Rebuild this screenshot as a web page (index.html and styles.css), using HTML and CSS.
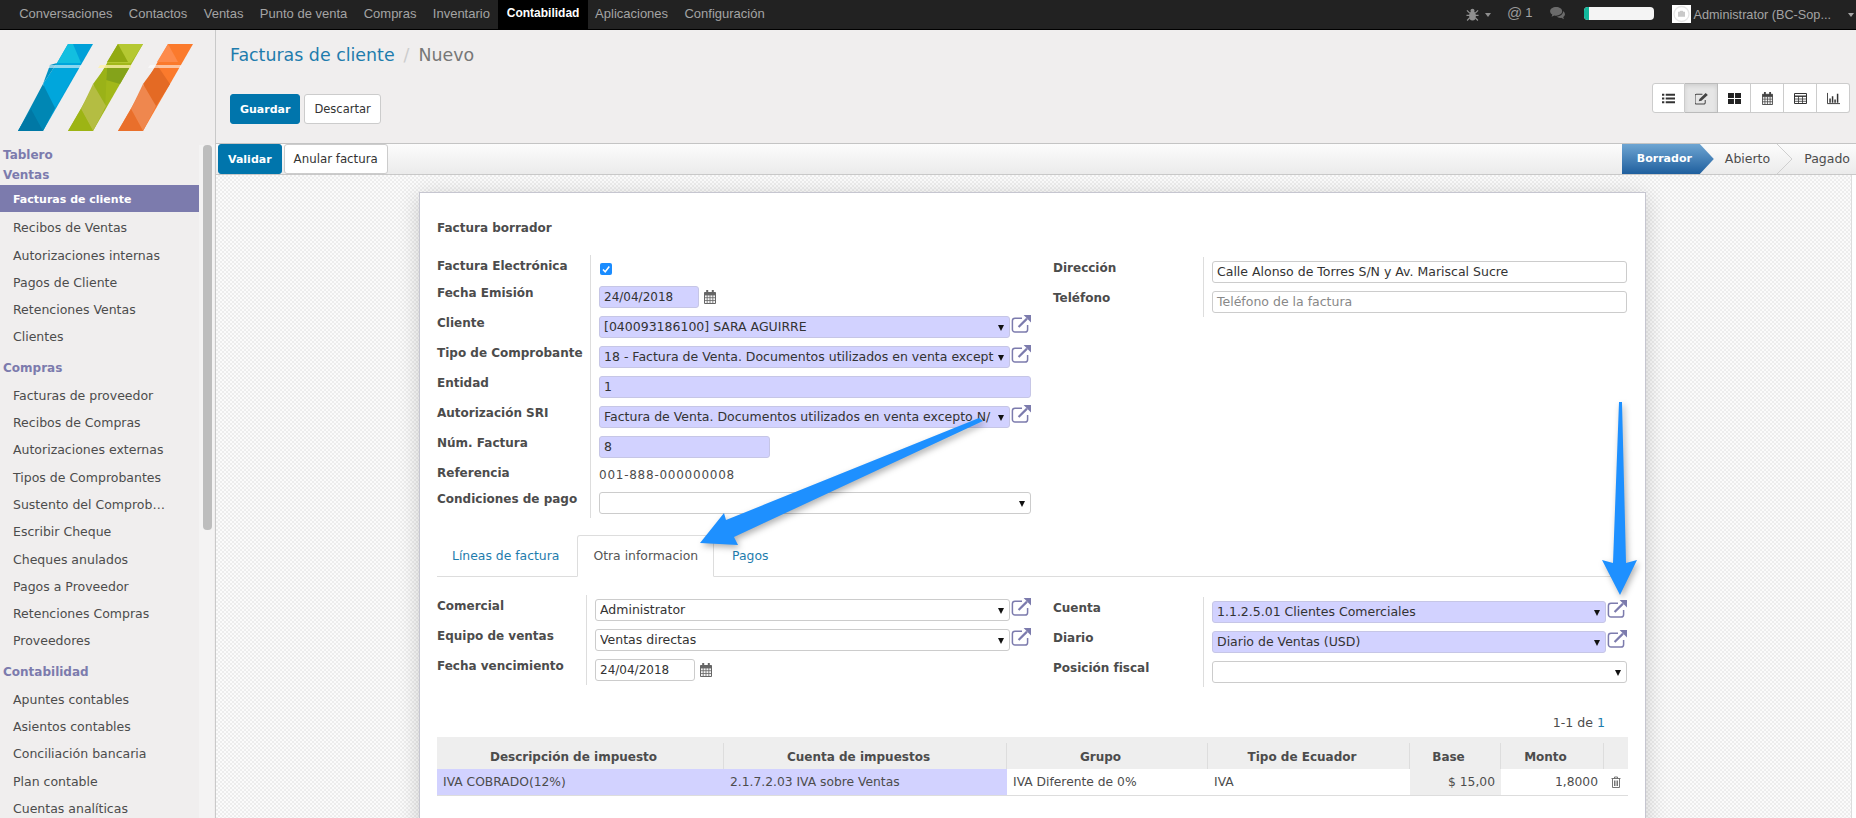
FILE: index.html
```html
<!DOCTYPE html>
<html lang="es">
<head>
<meta charset="utf-8">
<title>Facturas de cliente</title>
<link rel="stylesheet" href="styles.css">
</head>
<body>
<svg class="defs" width="0" height="0" aria-hidden="true">
  <symbol id="i-ext" viewBox="0 0 20 18">
    <path d="M11 3.2H4a2.6 2.6 0 0 0-2.6 2.6v8.6A2.6 2.6 0 0 0 4 17h10a2.6 2.6 0 0 0 2.6-2.6V10" fill="none" stroke="currentColor" stroke-width="1.5"/>
    <path d="M7.6 12 16 3.6" fill="none" stroke="currentColor" stroke-width="2.2"/>
    <path d="M12.6 0H20v7.4z" fill="currentColor"/>
  </symbol>
  <symbol id="i-cal" viewBox="0 0 12 14">
    <path d="M.5 2.5h11v11H.5z" fill="#f4f4f4" stroke="currentColor"/>
    <path d="M.5 5h11M.5 7.7h11M.5 10.5h11M3.2 5v8.5M6 5v8.5M8.8 5v8.5" stroke="currentColor" stroke-width=".8"/>
    <path d="M2.2 0h2v3.4h-2zM7.8 0h2v3.4h-2z" fill="currentColor"/>
    <path d="M.5 2.5h11V5H.5z" fill="currentColor"/>
  </symbol>
</svg>

<header class="topbar">
  <nav class="topnav">
    <a>Conversaciones</a><a>Contactos</a><a>Ventas</a><a>Punto de venta</a><a>Compras</a><a>Inventario</a><a class="on">Contabilidad</a><a>Aplicaciones</a><a>Configuración</a>
  </nav>
  <div class="systray">
    <svg class="t-bug" viewBox="0 0 14 14"><ellipse cx="7" cy="8.5" rx="3.6" ry="5" fill="#8f8f8f"/><circle cx="7" cy="3" r="2.2" fill="#8f8f8f"/><path d="M1 2.5l3 3M13 2.5l-3 3M.5 8h13M1.2 13.5 4 10.5M12.8 13.5 10 10.5" stroke="#8f8f8f" stroke-width="1.3" fill="none"/></svg>
    <i class="caret"></i>
    <span class="t-at">@</span><span class="t-one">1</span>
    <svg class="t-chat" viewBox="0 0 17 14"><path d="M6.5 0C2.9 0 0 2 0 4.6c0 1.500 1 2.800 2.400 3.600L1.600 10.600l3-1.500c.6.100 1.200.2 1.900.2 3.600 0 6.500-2.100 6.500-4.700S10.100 0 6.500 0z" fill="#6b6b6b"/><path d="M14 4.500c.1 3-2.900 5.500-7 5.800 1 1 2.500 1.500 4 1.500l.9-.1 3 1.600-.8-2.400c1.200-.7 1.900-1.800 1.900-3 0-1.500-.8-2.700-2-3.400z" fill="#6b6b6b"/></svg>
    <div class="progress"><span class="progress-fill"></span></div>
    <div class="avatar"><svg viewBox="0 0 19 18"><circle cx="9.500" cy="9" r="7.500" fill="none" stroke="#e6e6e6" stroke-width="1.300"/><path d="M6 6.800h1.600l.7-1h2.400l.7 1H13v5H6z" fill="#c9c9c9"/></svg></div>
    <span class="t-user">Administrator (BC-Sop...</span>
    <i class="caret user-caret"></i>
  </div>
</header>

<div class="app">
  <aside class="sidebar">
    <div class="logo">
      <svg viewBox="0 0 175 87" width="175" height="87">
        <g>
          <path d="M50 0h25L25 87H0z" fill="#00a0d8"/>
          <path d="M50 0h5l8 19H39z" fill="#12bfe0"/>
          <path d="M39 19h24L37 64 25 40z" fill="#00a6dc"/>
          <path d="M25 40 37 64 25 87H0z" fill="#0087b4"/>
          <path d="M25 40 32 21 39 19z" fill="#0093c4"/>
          <path d="M13 65 25 87H0z" fill="#0078a5"/>
          <path d="M32 21h31v3H30z" fill="#fff" opacity=".55"/>
        </g>
        <g transform="translate(50)">
          <path d="M50 0h25L25 87H0z" fill="#a2b81a"/>
          <path d="M50 0h25L63 19H39z" fill="#b5c832"/>
          <path d="M50 0 60 18H39z" fill="#92aa12"/>
          <path d="M39 21h24L52 40 38 36z" fill="#84a31a"/>
          <path d="M25 40 39 21l-2 46z" fill="#9ab218"/>
          <path d="M25 40 38 62 25 87 13 65z" fill="#b4bd42"/>
          <path d="M13 65 25 87H0z" fill="#9db414"/>
          <path d="M32 21h31v3H30z" fill="#fff3a8" opacity=".8"/>
        </g>
        <g transform="translate(100)">
          <path d="M50 0h25L25 87H0z" fill="#fb7a2c"/>
          <path d="M50 0 60 18H39z" fill="#fd8b4c"/>
          <path d="M25 40 39 21l13 19-15 24z" fill="#e46a24"/>
          <path d="M25 40 38 62 25 87 13 65z" fill="#ef874e"/>
          <path d="M13 65 25 87H0z" fill="#e96f2b"/>
          <path d="M32 21h31v3H30z" fill="#fff" opacity=".55"/>
        </g>
      </svg>
    </div>
    <div class="menu-wrap">
      <div class="menu">
        <div class="mhead tight">Tablero</div>
        <div class="mhead tight">Ventas</div>
        <a class="mitem on">Facturas de cliente</a>
        <a class="mitem">Recibos de Ventas</a>
        <a class="mitem">Autorizaciones internas</a>
        <a class="mitem">Pagos de Cliente</a>
        <a class="mitem">Retenciones Ventas</a>
        <a class="mitem">Clientes</a>
        <div class="mhead">Compras</div>
        <a class="mitem">Facturas de proveedor</a>
        <a class="mitem">Recibos de Compras</a>
        <a class="mitem">Autorizaciones externas</a>
        <a class="mitem">Tipos de Comprobantes</a>
        <a class="mitem">Sustento del Comprobante</a>
        <a class="mitem">Escribir Cheque</a>
        <a class="mitem">Cheques anulados</a>
        <a class="mitem">Pagos a Proveedor</a>
        <a class="mitem">Retenciones Compras</a>
        <a class="mitem">Proveedores</a>
        <div class="mhead">Contabilidad</div>
        <a class="mitem">Apuntes contables</a>
        <a class="mitem">Asientos contables</a>
        <a class="mitem">Conciliación bancaria</a>
        <a class="mitem">Plan contable</a>
        <a class="mitem">Cuentas analíticas</a>
      </div>
      <div class="menu-track"><div class="menu-thumb"></div></div>
    </div>
  </aside>

  <main class="main">
    <section class="head">
      <div class="head-left">
        <div class="crumbs"><a>Facturas de cliente</a><span class="sep">/</span><span class="cur">Nuevo</span></div>
        <div class="head-btns"><button class="btn primary">Guardar</button><button class="btn">Descartar</button></div>
      </div>
      <div class="views">
        <span class="view"><svg viewBox="0 0 14 12"><path d="M0 1h2.500v2H0zM4 1h10v2H4zM0 5h2.500v2H0zM4 5h10v2H4zM0 9h2.500v2H0zM4 9h10v2H4z" fill="#333"/></svg></span>
        <span class="view on"><svg viewBox="0 0 14 13"><path d="M11 8v3a1.500 1.500 0 0 1-1.500 1.500h-8A1.500 1.500 0 0 1 0 11V3.500A1.500 1.500 0 0 1 1.500 2H8" fill="none" stroke="#444" stroke-width="1.100"/><path d="M4 9.500 4.800 7 11.500 .5 13.800 2.700 7 9z" fill="#444"/></svg></span>
        <span class="view"><svg viewBox="0 0 12 10"><path d="M0 0h5.500v4.500H0zM6.500 0H12v4.500H6.500zM0 5.500h5.500V10H0zM6.500 5.500H12V10H6.500z" fill="#222"/></svg></span>
        <span class="view cal-view"><svg viewBox="0 0 12 14"><use href="#i-cal"/></svg></span>
        <span class="view"><svg viewBox="0 0 13 11"><path d="M.5.500h12v10H.5z" fill="none" stroke="#333"/><path d="M.5 3.200h12" stroke="#333" stroke-width="1.400"/><path d="M.5 6h12M.5 8.300h12M4.500 3v7.500M8.500 3v7.500" stroke="#333" stroke-width=".8"/></svg></span>
        <span class="view"><svg viewBox="0 0 14 12"><path d="M.5 0v11.500H14" fill="none" stroke="#333"/><path d="M2.500 6h1.600v4.500H2.500zM5.200 3.500h1.600v7H5.200zM7.900 7h1.600v3.500H7.900zM10.600 1h1.600v9.500h-1.600z" fill="#333"/></svg></span>
      </div>
    </section>

    <section class="statusbar">
      <div class="actions"><button class="btn primary">Validar</button><button class="btn">Anular factura</button></div>
      <div class="states">
        <span class="st-active">Borrador</span>
        <span class="st-item first">Abierto</span>
        <svg class="chevron" viewBox="0 0 15 30" preserveAspectRatio="none"><path d="M0 0 15 15 0 30" fill="none" stroke="#cfcfcf"/></svg>
        <span class="st-item last">Pagado</span>
      </div>
    </section>

    <div class="scroller">
      <div class="canvas">
        <article class="sheet">
          <h1 class="sheet-title">Factura borrador</h1>

          <div class="cols">
            <div class="group g-top">
              <div class="lab">Factura Electrónica</div>
              <div class="val first-val"><span class="check"><svg viewBox="0 0 12 12"><path d="M3 6.500 5.200 8.800 9.300 3.500" fill="none" stroke="#fff" stroke-width="1.500"/></svg></span></div>

              <div class="lab">Fecha Emisión</div>
              <div class="val"><span class="field date req">24/04/2018</span><svg class="cal"><use href="#i-cal"/></svg></div>

              <div class="lab">Cliente</div>
              <div class="val"><span class="field sel req"><span class="ftext">[040093186100] SARA AGUIRRE</span><i class="arrow"></i></span><svg class="ext"><use href="#i-ext"/></svg></div>

              <div class="lab">Tipo de Comprobante</div>
              <div class="val"><span class="field sel req"><span class="ftext">18 - Factura de Venta. Documentos utilizados en venta excepto</span><i class="arrow"></i></span><svg class="ext"><use href="#i-ext"/></svg></div>

              <div class="lab">Entidad</div>
              <div class="val"><span class="field wide req">1</span></div>

              <div class="lab">Autorización SRI</div>
              <div class="val"><span class="field sel req"><span class="ftext">Factura de Venta. Documentos utilizados en venta excepto N/</span><i class="arrow"></i></span><svg class="ext"><use href="#i-ext"/></svg></div>

              <div class="lab">Núm. Factura</div>
              <div class="val"><span class="field num req">8</span></div>

              <div class="lab">Referencia</div>
              <div class="val short-val"><span class="plain">001-888-000000008</span></div>

              <div class="lab">Condiciones de pago</div>
              <div class="val"><span class="field sel wide"><span class="ftext"></span><i class="arrow"></i></span></div>
            </div>

            <div class="group g-right g-shift">
              <div class="lab">Dirección</div>
              <div class="val"><span class="field wide">Calle Alonso de Torres S/N y Av. Mariscal Sucre</span></div>
              <div class="lab">Teléfono</div>
              <div class="val"><span class="field wide ph">Teléfono de la factura</span></div>
            </div>
          </div>

          <div class="tabs">
            <a class="tab">Líneas de factura</a>
            <a class="tab on">Otra informacion</a>
            <a class="tab">Pagos</a>
          </div>

          <div class="cols cols-2">
            <div class="group g-second">
              <div class="lab">Comercial</div>
              <div class="val"><span class="field sel"><span class="ftext">Administrator</span><i class="arrow"></i></span><svg class="ext"><use href="#i-ext"/></svg></div>
              <div class="lab">Equipo de ventas</div>
              <div class="val"><span class="field sel"><span class="ftext">Ventas directas</span><i class="arrow"></i></span><svg class="ext"><use href="#i-ext"/></svg></div>
              <div class="lab">Fecha vencimiento</div>
              <div class="val"><span class="field date">24/04/2018</span><svg class="cal"><use href="#i-cal"/></svg></div>
            </div>
            <div class="group g-right g-shift">
              <div class="lab">Cuenta</div>
              <div class="val"><span class="field sel req"><span class="ftext">1.1.2.5.01 Clientes Comerciales</span><i class="arrow"></i></span><svg class="ext"><use href="#i-ext"/></svg></div>
              <div class="lab">Diario</div>
              <div class="val"><span class="field sel req"><span class="ftext">Diario de Ventas (USD)</span><i class="arrow"></i></span><svg class="ext"><use href="#i-ext"/></svg></div>
              <div class="lab">Posición fiscal</div>
              <div class="val"><span class="field sel wide"><span class="ftext"></span><i class="arrow"></i></span></div>
            </div>
          </div>

          <div class="pager">1-1 de <a>1</a></div>

          <table class="taxes">
            <colgroup><col class="c1"><col class="c2"><col class="c3"><col class="c4"><col class="c5"><col class="c6"><col class="c7"></colgroup>
            <thead>
              <tr><th>Descripción de impuesto</th><th>Cuenta de impuestos</th><th>Grupo</th><th>Tipo de Ecuador</th><th>Base</th><th>Monto</th><th class="no-sep"></th></tr>
            </thead>
            <tbody>
              <tr>
                <td class="hl">IVA COBRADO(12%)</td>
                <td class="hl">2.1.7.2.03 IVA sobre Ventas</td>
                <td>IVA Diferente de 0%</td>
                <td>IVA</td>
                <td class="amount ro">$ 15,00</td>
                <td class="amount">1,8000</td>
                <td class="del"><svg viewBox="0 0 10 12" width="10" height="12"><path d="M.5 2.500h9M3.500 2.500V1h3v1.500M1.500 2.500V11.500h7V2.500M3.500 4.500v5.500M5 4.500v5.500M6.500 4.500v5.500" fill="none" stroke="#666" stroke-width=".9"/></svg></td>
              </tr>
            </tbody>
          </table>
        </article>
      </div>
      <div class="page-track"></div>
    </div>
  </main>
</div>

<svg class="overlay" viewBox="0 0 1856 818" width="1856" height="818" aria-hidden="true">
  <path class="mark" d="M979 418 983 421 734 537 738 545 700 543 724 513 726 520z"/>
  <path class="mark" d="M1619 402h3l4 161 11-3-17 35-18-35 11 3z"/>
</svg>
</body>
</html>
```
FILE: styles.css
```css
* { box-sizing: border-box; }
html, body { margin: 0; padding: 0; height: 818px; overflow: hidden; }
body {
  position: relative;
  font-family: "DejaVu Sans", sans-serif;
  font-size: 12px;
  color: #4c4c4c;
  background: #f0eeee;
}
a { text-decoration: none; color: inherit; }
.defs { display: block; height: 0; }

/* top bar */
.topbar {
  height: 30px;
  display: flex;
  justify-content: space-between;
  background: #222;
  border-bottom: 1px solid #000;
  font-family: "Liberation Sans", Arial, sans-serif;
  font-size: 13px;
  color: #a4a4a4;
}
.topnav { display: flex; padding-left: 11px; }
.topnav a { padding: 0 8.200px; line-height: 27px; height: 29px; }
.topnav a.on { width: 90px; padding: 0; text-align: center; background: #000; color: #fff; font-weight: 700; font-size: 12px; }
.topnav a.on + a { padding-left: 7px; }
.systray { display: flex; align-items: center; height: 29px; }
.t-bug { width: 13px; height: 13px; }
.caret { width: 0; height: 0; border: 3.5px solid transparent; border-top: 4px solid #8f8f8f; border-bottom: 0; margin-left: 6px; }
.t-at { font-size: 15px; margin-left: 16px; color: #999; margin-top: -5px; }
.t-one { margin-left: 3px; margin-top: -5px; }
.t-chat { width: 16px; height: 13px; margin-left: 17px; margin-top: -2px; }
.progress { width: 70px; height: 13px; margin-left: 18px; border-radius: 4px; background: #f4f4f4; overflow: hidden; margin-top: -3px; }
.progress-fill { display: block; width: 5px; height: 13px; background: #12b89c; }
.avatar { width: 19px; height: 18px; margin-left: 18px; background: #fff; margin-top: -1px; }
.avatar svg { display: block; width: 19px; height: 18px; }
.t-user { margin-left: 3px; font-size: 12.700px; }
.user-caret { margin-left: 17px; margin-right: 2px; border-top-color: #a4a4a4; }

/* app */
.app { display: flex; height: 788px; }
.sidebar { width: 216px; flex: none; border-right: 1px solid #c9c9c9; background: #f0eeee; }
.logo { height: 115px; padding: 14px 0 0 18px; }
.logo svg { display: block; }
.menu-wrap { display: flex; height: 673px; overflow: hidden; }
.menu { width: 199px; flex: none; }
.mhead { padding: 9px 0 2px 3px; line-height: 20px; font-weight: 700; color: #7c7bad; }
.mhead.tight { padding: 0 0 0 3px; line-height: 20px; }
.mitem {
  display: block;
  height: 27.300px;
  line-height: 31px;
  padding: 0 32px 0 13px;
  font-size: 12.500px;
  white-space: nowrap;
  overflow: hidden;
  text-overflow: ellipsis;
}
.mitem.on { background: #7c7bad; color: #fff; font-weight: 700; font-size: 11px; line-height: 29px; }
.menu-track { width: 15px; margin-left: 0; padding: 0 2px 0 4px; background: #f4f3f3; }
.menu-thumb { width: 9px; height: 385px; background: #bdbdbd; border-radius: 4px; }

.main { flex: 1; min-width: 0; display: flex; flex-direction: column; }
.head { height: 113px; display: flex; justify-content: space-between; padding: 0 6px 0 14px; }
.crumbs { height: 64px; padding-top: 13px; line-height: 24px; font-size: 17.400px; color: #777; }
.crumbs a { color: #1e7cad; }
.sep { color: #ccc; margin: 0 9px; }
.head-btns { display: flex; gap: 4px; }
.btn {
  height: 30px;
  padding: 0 9px;
  font: inherit;
  font-size: 11.500px;
  color: #333;
  background: #fff;
  border: 1px solid #ccc;
  border-radius: 3px;
}
.btn.primary { padding: 0 9px; background: #0075ac; border-color: #0075ac; color: #fff; font-weight: 700; font-size: 11px; }
.views { display: flex; margin-top: 53px; height: 30px; }
.view {
  width: 33px;
  display: flex;
  align-items: center;
  justify-content: center;
  background: #fff;
  border: 1px solid #ccc;
  border-left-width: 0;
}
.view:first-child { border-left-width: 1px; border-radius: 3px 0 0 3px; }
.view:last-child { border-radius: 0 3px 3px 0; }
.view svg { width: 13px; height: 13px; }
.view.on { background: #e6e6e6; border-color: #bbb; box-shadow: inset 0 2px 4px rgba(0,0,0,.1); }
.cal-view { color: #444; }

.statusbar {
  height: 32px;
  display: flex;
  justify-content: space-between;
  border-top: 1px solid #c4c4c4;
  border-bottom: 1px solid #c8c8c8;
  background: linear-gradient(#fcfcfc, #ebebeb);
}
.actions { display: flex; gap: 2px; padding-left: 2px; }
.actions .btn:not(.primary) { font-size: 11.800px; }
.states { display: flex; align-items: stretch; font-size: 12.500px; }
.st-active {
  width: 92px;
  padding-left: 15px;
  line-height: 30px;
  font-size: 11px;
  font-weight: 700;
  color: #fff;
  background: linear-gradient(#6ea5d2, #1f5f9e);
  clip-path: polygon(0 0, 78px 0, 100% 50%, 78px 100%, 0 100%);
}
.st-item { line-height: 30px; color: #4c4c4c; }
.st-item.first { padding: 0 7px 0 11px; }
.st-item.last { padding: 0 6px 0 12px; }
.chevron { width: 15px; height: 30px; }

.scroller { flex: 1; min-height: 0; display: flex; }
.canvas {
  flex: 1;
  min-width: 0;
  padding: 17px 0 0 203px;
  overflow: hidden;
  background: repeating-conic-gradient(#ededed 0 25%, #fbfbfb 0 50%) 0 0 / 4px 4px;
}
.page-track { width: 5px; background: #fff; border-left: 1px solid #ddd; }
.sheet {
  width: 1227px;
  height: 640px;
  padding: 24px 19px 0 17px;
  background: #fff;
  border: 1px solid #c6c6d0;
  box-shadow: 0 4px 20px rgba(0,0,0,.18);
}
.sheet-title { margin: 0; font-size: 12px; line-height: 22px; font-weight: 700; color: #4c4c4c; }

.cols { display: grid; grid-template-columns: 595px 574px; column-gap: 21px; margin-top: 16px; align-items: start; }
.group { display: grid; grid-auto-rows: 30px; }
.g-top { grid-template-columns: 154px 440px; }
.g-right { grid-template-columns: 151px 423px; }
.g-second { grid-template-columns: 150px 444px; }
.g-shift { margin-top: 2px; }
.lab { font-weight: 700; line-height: 22px; border-right: 1px solid #ddd; white-space: nowrap; }
.val { display: flex; padding: 4px 0 0 8px; min-width: 0; }
.g-top { grid-template-rows: 27px repeat(6, 30px) 26px 30px; }
.first-val { padding-top: 8px; }
.short-val { padding-top: 0; }
.check {
  width: 12px;
  height: 12px;
  margin-left: 1px;
  border-radius: 2px;
  background: #1a8cff;
}
.check svg { display: block; width: 12px; height: 12px; }
.plain { line-height: 26px; color: #4c4c4c; letter-spacing: .75px; }
.field {
  display: flex;
  align-items: center;
  height: 22px;
  padding: 0 4px;
  font-size: 12.500px;
  line-height: 20px;
  color: #333;
  background: #fff;
  border: 1px solid #ccc;
  border-radius: 3px;
  overflow: hidden;
  white-space: nowrap;
}
.field.req { background: #d2d2ff; border-color: #c6c6e6; }
.field.date { width: 100px; font-size: 12px; }
.field.num { width: 171px; }
.field.wide { flex: 1; }
.field.sel { flex: 1; min-width: 0; }
.field.ph { color: #888; }
.ftext { flex: 1; min-width: 0; overflow: hidden; }
.arrow { flex: none; width: 0; height: 0; margin: 2px 1px 0 4px; border: 3px solid transparent; border-top: 6px solid #111; border-bottom: 0; }
.ext { flex: none; width: 20px; height: 18px; margin: -1px 0 0 1px; color: #7c7bad; }
.cal { flex: none; width: 12px; height: 14px; margin: 4px 0 0 5px; color: #666; }

.tabs { display: flex; height: 42px; margin-top: 17px; border-bottom: 1px solid #ddd; font-size: 12.400px; }
.tab { padding: 0 18px 0 15px; line-height: 42px; color: #1e7cad; height: 41px; }
.tab.on { padding: 0 15px; color: #555; background: #fff; border: 1px solid #ddd; border-bottom-color: #fff; border-radius: 3px 3px 0 0; line-height: 40px; height: 42px; }
.tab.on + .tab { padding-left: 18px; }
.cols-2 { margin-top: 18px; }

.pager { height: 21px; margin-top: 25px; padding-right: 21px; text-align: right; line-height: 22px; font-size: 12.600px; }
.pager a { color: #1e7cad; }

.taxes { width: 1191px; margin-top: 4px; table-layout: fixed; border-collapse: collapse; font-size: 12.300px; }
.c1 { width: 287px; } .c2 { width: 283px; } .c3 { width: 201px; } .c4 { width: 202px; }
.c5 { width: 91px; } .c6 { width: 103px; } .c7 { width: 24px; }
.taxes th {
  height: 32px;
  padding: 7px 16px 0 2px;
  font-size: 12px;
  font-weight: 700;
  text-align: center;
  color: #4c4c4c;
  background: #eee linear-gradient(#ddd, #ddd) right bottom / 1px 26px no-repeat;
}
.taxes th.no-sep { background-image: none; }
.taxes td { height: 26px; padding: 0 6px; white-space: nowrap; border-bottom: 1px solid #ddd; }
.taxes td.hl { background: #d2d2ff; }
.taxes td.amount { text-align: right; }
.taxes td.ro { background: #eee; }
.taxes td.del { padding: 0 0 0 7px; }
.del svg { display: block; }

.overlay { position: absolute; left: 0; top: 0; pointer-events: none; }
.mark { fill: #1e90ff; filter: drop-shadow(2px 3px 3px rgba(0,0,0,.3)); }
```
